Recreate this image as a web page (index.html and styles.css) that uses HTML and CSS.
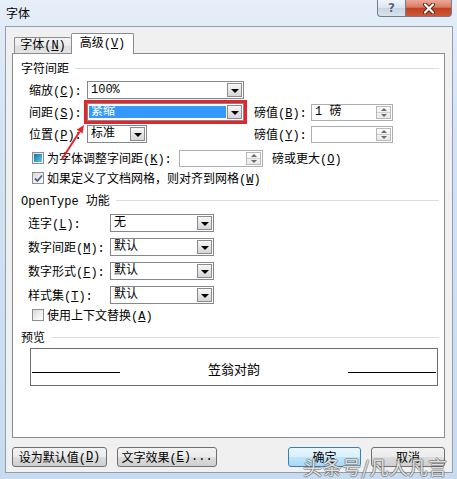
FILE: index.html
```html
<!DOCTYPE html>
<html lang="zh-CN">
<head>
    <meta charset="UTF-8">
    <meta name="viewport" content="width=device-width, initial-scale=1.0">
    <title>字体</title>
    <link rel="stylesheet" href="styles.css">
</head>
<body>
    <div class="window">
        <div class="titlebar">
            <span class="title">字体</span>
            <div class="caption-buttons">
                <div class="cap-btn help">?</div>
                <div class="cap-btn close">
                    <svg width="14" height="11" viewBox="0 0 14 11">
                        <path d="M3 1.5 L11 9.5 M11 1.5 L3 9.5" stroke="#5a2418" stroke-width="4" stroke-linecap="round"/>
                        <path d="M3 1.5 L11 9.5 M11 1.5 L3 9.5" stroke="#fff" stroke-width="2.2" stroke-linecap="round"/>
                    </svg>
                </div>
            </div>
        </div>

        <div class="client">
            <div class="tabs">
                <div class="tab">字体(<u>N</u>)</div>
                <div class="tab active">高级(<u>V</u>)</div>
            </div>

            <div class="panel">
                <div class="group-title">字符间距</div>

                <div class="spacing">
                    <div class="row">
                        <span class="lbl">缩放(<u>C</u>):</span>
                        <div class="cell">
                            <div class="combo wide"><span class="value">100%</span><span class="drop"></span></div>
                        </div>
                    </div>
                    <div class="row">
                        <span class="lbl">间距(<u>S</u>):</span>
                        <div class="cell">
                            <div class="combo wide marked"><span class="value selected">紧缩</span><span class="drop"></span></div>
                        </div>
                        <span class="sub-lbl">磅值(<u>B</u>):</span>
                        <div class="spin"><span class="value">1 磅</span><span class="spin-btn"><span></span><span></span></span></div>
                    </div>
                    <div class="row">
                        <span class="lbl">位置(<u>P</u>):</span>
                        <div class="cell">
                            <div class="combo small"><span class="value">标准</span><span class="drop"></span></div>
                        </div>
                        <span class="sub-lbl">磅值(<u>Y</u>):</span>
                        <div class="spin"><span class="value"></span><span class="spin-btn"><span></span><span></span></span></div>
                    </div>
                </div>

                <div class="check-row first">
                    <span class="check mixed"></span>
                    <span class="check-text fixed">为字体调整字间距(<u>K</u>):</span>
                    <div class="spin kern"><span class="value"></span><span class="spin-btn"><span></span><span></span></span></div>
                    <span class="after-spin">磅或更大(<u>O</u>)</span>
                </div>
                <div class="check-row">
                    <span class="check checked">
                        <svg width="9" height="9" viewBox="0 0 9 9"><path d="M1 4.5 L3.5 7 L8 1.5" fill="none" stroke="#4a5f88" stroke-width="1.8"/></svg>
                    </span>
                    <span class="check-text">如果定义了文档网格，则对齐到网格(<u>W</u>)</span>
                </div>

                <div class="group-title second">OpenType 功能</div>

                <div class="opentype">
                    <div class="row">
                        <span class="lbl">连字(<u>L</u>):</span>
                        <div class="combo ot"><span class="value">无</span><span class="drop"></span></div>
                    </div>
                    <div class="row">
                        <span class="lbl">数字间距(<u>M</u>):</span>
                        <div class="combo ot"><span class="value">默认</span><span class="drop"></span></div>
                    </div>
                    <div class="row">
                        <span class="lbl">数字形式(<u>F</u>):</span>
                        <div class="combo ot"><span class="value">默认</span><span class="drop"></span></div>
                    </div>
                    <div class="row">
                        <span class="lbl">样式集(<u>T</u>):</span>
                        <div class="combo ot"><span class="value">默认</span><span class="drop"></span></div>
                    </div>
                </div>

                <div class="check-row">
                    <span class="check"></span>
                    <span class="check-text">使用上下文替换(<u>A</u>)</span>
                </div>

                <div class="group-title second">预览</div>

                <div class="preview">
                    <span class="pline"></span>
                    <span class="sample">笠翁对韵</span>
                    <span class="pline"></span>
                </div>
            </div>

            <div class="footer">
                <div class="btn w-default">设为默认值(<u>D</u>)</div>
                <div class="btn w-effects">文字效果(<u>E</u>)...</div>
                <div class="btn ok">确定</div>
                <div class="btn cancel">取消</div>
            </div>
        </div>

        <!-- annotation arrow -->
        <svg class="arrow" width="457" height="479" viewBox="0 0 457 479">
            <line x1="62" y1="159" x2="79.6" y2="131.7" stroke="#e3262b" stroke-width="2"/>
            <polygon points="84,125 82.6,133.6 76.7,129.8" fill="#e3262b"/>
        </svg>

        <div class="watermark">头条号/凡人凡言</div>
    </div>
</body>
</html>
```

FILE: styles.css
```css
* {
    margin: 0;
    padding: 0;
    box-sizing: border-box;
}

body {
    font-family: "Liberation Mono", "Noto Sans CJK SC", monospace;
    font-size: 12px;
    color: #000;
    background: #cddff3;
    overflow: hidden;
}

u {
    text-underline-offset: 1px;
}

.window {
    position: relative;
    width: 457px;
    height: 479px;
    display: flex;
    flex-direction: column;
    padding: 0 4px 6px 5px;
    background: linear-gradient(180deg, #e6eef8 0%, #d5e3f3 25%, #c9dbef 100%);
}

/* title bar */
.titlebar {
    height: 26px;
    display: flex;
    align-items: flex-start;
    justify-content: space-between;
}

.title {
    margin: 6px 0 0 1px;
    line-height: 14px;
    font-family: "Noto Sans CJK SC", sans-serif;
}

.caption-buttons {
    display: flex;
    margin-right: 1px;
}

.cap-btn {
    height: 17px;
    display: flex;
    align-items: center;
    justify-content: center;
    border: 1px solid #6f7f93;
    border-top: none;
}

.help {
    width: 28px;
    border-right: none;
    border-radius: 0 0 0 4px;
    background: linear-gradient(180deg, #f1f5fa 0%, #dce4ee 50%, #c9d4e2 51%, #d9e2ed 100%);
    color: #56657a;
    font: bold 12px "DejaVu Sans", sans-serif;
    text-shadow: 0 0 2px #fff;
}

.close {
    width: 47px;
    border-radius: 0 0 4px 0;
    background: linear-gradient(180deg, #eaa999 0%, #d97a62 45%, #c2401f 52%, #d0573a 100%);
}

/* client area */
.client {
    flex: 1;
    display: flex;
    flex-direction: column;
    background: #f0f0f0;
    border: 1px solid #8ca0b5;
    padding: 6px 7px 0 6px;
}

.tabs {
    display: flex;
    align-items: flex-start;
    height: 20px;
    padding-left: 2px;
}

.tab {
    width: 57px;
    height: 16px;
    margin-top: 4px;
    border: 1px solid #898c95;
    border-bottom: none;
    border-right: none;
    border-radius: 2px 2px 0 0;
    background: linear-gradient(180deg, #f4f4f4 0%, #ebebeb 50%, #dddddd 51%, #e4e4e4 100%);
    text-align: center;
    line-height: 16px;
}

.tab.active {
    position: relative;
    z-index: 1;
    width: 63px;
    height: 21px;
    margin-top: 0;
    border-right: 1px solid #898c95;
    background: #fff;
    line-height: 20px;
}

.panel {
    height: 385px;
    display: flex;
    flex-direction: column;
    background: #fff;
    border: 1px solid #898c95;
}

.group-title {
    display: flex;
    align-items: center;
    height: 16px;
    margin: 6px 5px 0 8px;
    white-space: nowrap;
}

.group-title::after {
    content: "";
    flex: 1;
    height: 1px;
    margin-left: 6px;
    background: #d5dfe5;
}

.row {
    display: flex;
    align-items: center;
    height: 18px;
}

.spacing {
    margin: 5px 0 0 16px;
}

.spacing .row + .row {
    margin-top: 4px;
}

.spacing .lbl {
    width: 58px;
}

.cell {
    width: 167px;
}

.sub-lbl {
    width: 57px;
}

/* combo box */
.combo {
    height: 18px;
    display: flex;
    padding: 1px;
    border: 1px solid #828790;
    background: #fff;
}

.combo.wide {
    width: 157px;
}

.combo.small {
    width: 60px;
}

.combo.ot {
    width: 104px;
}

.combo.marked {
    outline: 3px solid #e3262b;
}

.combo .value {
    flex: 1;
    padding-left: 2px;
    line-height: 14px;
    white-space: nowrap;
}

.combo .value.selected {
    margin: 1px 1px 1px 0;
    line-height: 12px;
    background: #3399ff;
    color: #fff;
}

.drop {
    width: 15px;
    display: flex;
    align-items: center;
    justify-content: center;
    border: 1px solid #8c8c8c;
    background: linear-gradient(180deg, #f7f7f7 0%, #e6e6e6 50%, #d6d6d6 100%);
}

.drop::before {
    content: "";
    margin-top: 2px;
    border-left: 4px solid transparent;
    border-right: 4px solid transparent;
    border-top: 4px solid #000;
}

/* spin box */
.spin {
    width: 82px;
    height: 17px;
    display: flex;
    padding: 1px;
    border: 1px solid #abadb3;
    background: #fff;
}

.spin.kern {
    width: 84px;
}

.spin .value {
    flex: 1;
    padding-left: 2px;
    line-height: 13px;
}

.spin-btn {
    width: 15px;
    display: flex;
    flex-direction: column;
    border: 1px solid #b9b9b9;
    background: linear-gradient(180deg, #fbfbfb 0%, #e9e9e9 100%);
}

.spin-btn span {
    flex: 1;
    display: flex;
    align-items: center;
    justify-content: center;
}

.spin-btn span + span {
    border-top: 1px solid #cfcfcf;
}

.spin-btn span:first-child::before {
    content: "";
    border-left: 3px solid transparent;
    border-right: 3px solid transparent;
    border-bottom: 3px solid #6a6a6a;
}

.spin-btn span:last-child::before {
    content: "";
    border-left: 3px solid transparent;
    border-right: 3px solid transparent;
    border-top: 3px solid #6a6a6a;
}

/* check boxes */
.check-row {
    display: flex;
    align-items: center;
    height: 16px;
    margin: 3px 0 0 19px;
}

.check-row.first {
    height: 18px;
    margin-top: 6px;
}

.check {
    width: 12px;
    height: 12px;
    margin-right: 3px;
    display: flex;
    align-items: center;
    justify-content: center;
    border: 1px solid #8e8f8f;
    background: linear-gradient(135deg, #d9d9d9 0%, #f6f6f6 70%, #fff 100%);
}

.check.mixed::before {
    content: "";
    width: 8px;
    height: 8px;
    background: linear-gradient(135deg, #1d6fa5 0%, #3ea6d6 60%, #6cc7ea 100%);
}

.check-text.fixed {
    width: 132px;
    white-space: nowrap;
}

.after-spin {
    margin-left: 9px;
}

.opentype {
    margin: 6px 0 0 15px;
}

.opentype .row + .row {
    margin-top: 6px;
}

.opentype .lbl {
    width: 82px;
}

/* preview */
.preview {
    height: 38px;
    margin: 3px 6px 0 17px;
    padding: 0 1px;
    display: flex;
    align-items: center;
    border: 1px solid #6d6d6d;
}

.pline {
    width: 88px;
    height: 1px;
    margin-top: 11px;
    background: #000;
}

.sample {
    flex: 1;
    margin-top: 3px;
    text-align: center;
    font-size: 13px;
    font-family: "Noto Sans CJK SC", sans-serif;
}

/* footer buttons */
.footer {
    display: flex;
    gap: 10px;
    margin-top: 9px;
}

.btn {
    height: 20px;
    display: flex;
    align-items: center;
    justify-content: center;
    border: 1px solid #707070;
    border-radius: 3px;
    background: linear-gradient(180deg, #f2f2f2 0%, #ebebeb 50%, #dddddd 51%, #cfcfcf 100%);
    white-space: nowrap;
}

.w-default {
    width: 95px;
}

.w-effects {
    width: 100px;
}

.btn.ok {
    width: 73px;
    margin-left: auto;
    border-color: #3c7fb1;
    background: linear-gradient(180deg, #eaf6fd 0%, #d9f0fc 50%, #bee6fd 51%, #a7d9f5 100%);
}

.btn.cancel {
    width: 74px;
}

/* overlays */
.arrow {
    position: absolute;
    left: 0;
    top: 0;
    pointer-events: none;
}

.watermark {
    position: absolute;
    left: 303px;
    top: 453px;
    font: 19px "Noto Sans CJK SC", sans-serif;
    letter-spacing: 0.5px;
    color: rgba(255, 255, 255, 0.8);
    text-shadow: 1px 0 rgba(90, 90, 90, 0.55), -1px 0 rgba(90, 90, 90, 0.55), 0 1px rgba(90, 90, 90, 0.55), 0 -1px rgba(90, 90, 90, 0.55);
    pointer-events: none;
}
```
